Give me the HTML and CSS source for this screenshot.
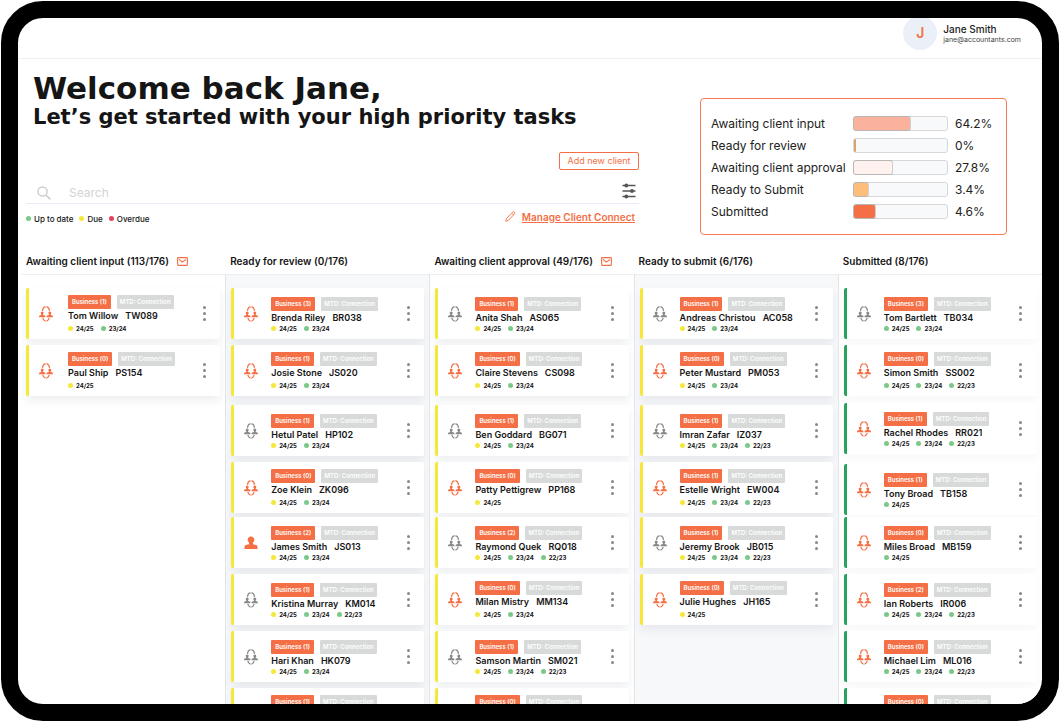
FILE: index.html
```html
<!DOCTYPE html>
<html lang="en">
<head>
<meta charset="utf-8">
<meta name="viewport" content="width=device-width, initial-scale=1">
<title>Client dashboard</title>
<link rel="stylesheet" href="styles.css">
</head>
<body>
<svg class="sprite" aria-hidden="true">
  <symbol id="icon-agents" viewBox="0 0 14 16">
    <g fill="none" stroke="currentColor" stroke-width="1.2">
      <path d="M3.500 4.900C3.700 2.600 4.700 1.200 6 .9M6.400.8h1.200M8 .9c1.300.3 2.300 1.700 2.500 4"/>
      <path d="M3.800 11.800c.3 1.600 1.100 2.700 2.300 3.100M6.500 15.100h1M7.900 14.900c1.200-.4 2-1.500 2.300-3.100"/>
    </g>
    <g fill="currentColor">
      <circle cx="3.200" cy="7.100" r="1.500"/><path d="M2.400 8h1.600v1.100l1.900.4q.6.200.6 1.700H0q0-1.500.6-1.700l1.800-.4z"/>
      <circle cx="10.800" cy="7.100" r="1.500"/><path d="M10 8h1.600v1.100l1.800.4q.6.200.6 1.700H7.500q0-1.500.6-1.700l1.900-.4z"/>
    </g>
  </symbol>
  <symbol id="icon-person" viewBox="0 0 14 16">
    <path fill="currentColor" d="M7 1.500a3.400 3.400 0 0 1 2 6.100v1.600l3.200.9c1.100.4 1.400 1.200 1.400 4H.4c0-2.800.3-3.600 1.400-4L5 9.200V7.600a3.400 3.400 0 0 1 2-6.100z"/>
  </symbol>
  <symbol id="icon-mail" viewBox="0 0 11 9">
    <rect x=".6" y=".6" width="9.800" height="7.800" rx=".8" fill="none" stroke="currentColor" stroke-width="1.100"/>
    <path d="M1.800 2.400 5.500 5l3.700-2.600" fill="none" stroke="currentColor" stroke-width="1.100"/>
  </symbol>
</svg>
<div class="device">
  <div class="screen">
    <header class="topbar">
      <div class="avatar">J</div>
      <div class="user">
        <div class="user-name">Jane Smith</div>
        <div class="user-mail">jane@accountants.com</div>
      </div>
    </header>
    <main class="main">
      <section class="intro">
        <div class="intro-left">
          <h1 class="title">Welcome back Jane,</h1>
          <p class="subtitle">Let’s get started with your high priority tasks</p>
          <button class="add-client" type="button">Add new client</button>
          <div class="search">
            <svg class="search-icon" viewBox="0 0 14 14" aria-hidden="true"><circle cx="5.500" cy="5.500" r="4.600" fill="none" stroke="currentColor" stroke-width="1.500"/><path d="m9 9 4.300 4.300" stroke="currentColor" stroke-width="1.700"/></svg>
            <input class="search-input" type="text" placeholder="Search" aria-label="Search">
            <button class="filter" type="button" aria-label="Filters">
              <svg viewBox="0 0 14 16" width="14" height="16" aria-hidden="true"><path d="M.5 2.500h13M.5 8h13M.5 13.500h13" stroke="currentColor" stroke-width="1.300"/><g fill="currentColor"><circle cx="4.300" cy="2.500" r="1.900"/><circle cx="10" cy="8" r="1.900"/><circle cx="4.300" cy="13.500" r="1.900"/></g></svg>
            </button>
          </div>
          <div class="subrow">
            <ul class="legend">
              <li><i class="dot dot-green"></i>Up to date</li>
              <li><i class="dot dot-yellow"></i>Due</li>
              <li><i class="dot dot-red"></i>Overdue</li>
            </ul>
            <a class="manage" href="#"><svg viewBox="0 0 11 11" width="11" height="11" aria-hidden="true"><path d="M.8 10.200 1.400 7.500 7.700 1.200q.8-.8 1.700 0 .9.900.1 1.700L3.300 9.500zM6.800 2.200l1.800 1.800" fill="none" stroke="currentColor" stroke-width=".9" stroke-linejoin="round"/></svg><span>Manage Client Connect</span></a>
          </div>
        </div>
        <ul class="stats">
          <li><span>Awaiting client input</span><div class="bar"><div class="fill fill-salmon" style="width:60%"></div></div><span>64.2%</span></li>
          <li><span>Ready for review</span><div class="bar"><div class="fill fill-tan" style="width:2%"></div></div><span>0%</span></li>
          <li><span>Awaiting client approval</span><div class="bar"><div class="fill fill-pale" style="width:41%"></div></div><span>27.8%</span></li>
          <li><span>Ready to Submit</span><div class="bar"><div class="fill fill-amber" style="width:15%"></div></div><span>3.4%</span></li>
          <li><span>Submitted</span><div class="bar"><div class="fill fill-orange" style="width:23%"></div></div><span>4.6%</span></li>
        </ul>
      </section>
      <section class="board" id="board"></section>
    </main>
  </div>
</div>
<script src="board.js"></script>
</body>
</html>
```
FILE: styles.css
```css
* { box-sizing: border-box; }
body { margin: 0; background: #fff; color: #151515; font-family: Inter, "Liberation Sans", sans-serif; }
h1, h2, p, ul { margin: 0; padding: 0; }
li { list-style: none; }
button { font: inherit; cursor: pointer; }
.sprite { display: none; }

.device { height: 100vh; padding: 1px; overflow: hidden; }
.screen { height: 100%; border: 17px solid #000; border-radius: 42px; overflow: hidden; display: flex; flex-direction: column; background: #fff; }

.topbar { flex: none; display: flex; justify-content: flex-end; align-items: center; gap: 6px; height: 41px; padding: 0 21px 10px 0; border-bottom: 1px solid #f0f1f3; overflow: hidden; }
.avatar { width: 34px; height: 34px; border-radius: 50%; background: #ebeff8; color: #f46f45; font-size: 14px; font-weight: 600; line-height: 34px; text-align: center; }
.user-name { font-size: 10px; line-height: 12px; font-weight: 500; color: #222; }
.user-mail { font-size: 7px; line-height: 9px; color: #444; }

.main { flex: 1; min-height: 0; display: flex; flex-direction: column; }
.intro { flex: none; display: grid; grid-template-columns: minmax(0, 1fr) 307px; column-gap: 61px; align-items: start; padding: 0 35px 0 8px; }
.intro-left { display: flex; flex-direction: column; }
.title { margin: 12px 0 0 7px; font: 700 31px/34px "DejaVu Sans", sans-serif; white-space: nowrap; }
.subtitle { margin-left: 7px; font: 700 21px/24px "DejaVu Sans", sans-serif; white-space: nowrap; }
.add-client { align-self: flex-end; width: 80px; height: 18px; margin-top: 23px; padding: 0; border: 1px solid #f46f45; border-radius: 2px; background: #fff; color: #f46f45; font-size: 9px; line-height: 14px; }
.search { display: flex; align-items: center; height: 34px; padding: 12px 3px 0 11px; border-bottom: 1px solid #ebecf6; }
.search-icon { width: 14px; height: 14px; color: #cfcfcf; }
.search-input { flex: 1; min-width: 0; margin-left: 18px; padding: 0; border: 0; outline: 0; font: 400 12px/16px Inter, sans-serif; }
.search-input::placeholder { color: #d3d3d3; opacity: 1; }
.filter { display: flex; padding: 0; border: 0; background: none; color: #555; margin: -4px 0 0; }
.subrow { display: flex; justify-content: space-between; align-items: center; height: 25px; margin-bottom: 1px; padding-right: 4px; }
.legend { display: flex; gap: 6px; padding-top: 4px; font-size: 8px; font-weight: 500; line-height: 10px; }
.legend li { display: flex; align-items: center; gap: 3px; }
.dot { flex: none; width: 5px; height: 5px; border-radius: 50%; }
.dot-green { background: #7bc988; }
.dot-yellow { background: #f6e83a; }
.dot-red { background: #e34360; }
.manage { display: flex; align-items: center; gap: 6px; color: #f46f45; font-size: 10px; line-height: 12px; font-weight: 600; text-decoration: none; }
.manage span { text-decoration: underline; }

.stats { margin-top: 39px; height: 137px; padding: 13px 6px 11px 10px; border: 1px solid #f47a55; border-radius: 4px; font-size: 12px; color: #222; }
.stats li { display: grid; grid-template-columns: minmax(0, 1fr) 95px 45px; column-gap: 7px; align-items: center; height: 22px; white-space: nowrap; }
.bar { height: 15px; border: 1px solid #d5d7d9; border-radius: 3px; background: #f8f9fb; }
.fill { height: 13px; border-radius: 2px; box-shadow: 0 0 0 1px rgba(120, 110, 100, .3); }
.fill-salmon { background: #fab29d; }
.fill-tan { background: #d8a56c; box-shadow: none; }
.fill-pale { background: #fff1ed; }
.fill-amber { background: #fdbe79; }
.fill-orange { background: #f46f45; }

.board { flex: 1; min-height: 0; display: grid; grid-template-columns: repeat(5, minmax(0, 1fr)); grid-template-rows: minmax(0, 1fr); padding: 13px 0 0 3px; overflow: hidden; }
.column { display: flex; flex-direction: column; min-height: 0; }
.column-title { display: flex; align-items: center; gap: 8px; height: 26px; padding-left: 5px; font-size: 10px; line-height: 14px; font-weight: 600; white-space: nowrap; }
.mail { width: 11px; height: 9px; color: #f46f45; }
.cards { flex: 1; min-height: 0; padding: 13px 5px 0; border-top: 1px solid #eceeef; border-left: 1px solid #e2e5e7; overflow: hidden; }
.column:first-child .cards { padding-left: 4px; border-left-color: transparent; }
.column:first-child .details { padding-left: 5px; }
.column:nth-child(even) .cards { background: #f7f8fa; }
.card { display: grid; grid-template-columns: 34px minmax(0, 1fr) 32px; height: 51px; margin-bottom: 6px; border-left: 3px solid #f6e83a; border-radius: 2px; background: #fff; box-shadow: 0 5px 10px rgba(70, 80, 95, .09); }
.card:nth-child(2) { margin-bottom: 9px; }
.card:nth-child(4) { margin-bottom: 4px; }
.column-done .card { border-left-color: #27a35b; box-shadow: 0 5px 8px rgba(70, 80, 95, .04); }
.column-done .card:nth-child(2) { margin-bottom: 7px; }
.column-done .card:nth-child(3) { margin-bottom: 10px; }
.column-done .card:nth-child(4) { margin-bottom: 2px; }
.agent { width: 14px; height: 16px; margin: 18px 0 0 10px; color: #888; }
.agent-on { color: #f46f45; }
.details { padding: 9px 0 0 3px; white-space: nowrap; }
.details-high { padding-top: 7px; }
.tags { display: flex; gap: 6px; }
.tag { height: 14px; padding: 0 4px; border-radius: 1px; background: #f46f45; color: #fff; font-size: 6px; line-height: 14px; font-weight: 600; }
.tag-muted { padding: 0 3px; background: #d8dada; }
.name { display: flex; gap: 7px; font-size: 9px; line-height: 14px; font-weight: 600; }
.years { display: flex; gap: 7px; font-size: 6px; line-height: 7px; font-weight: 700; }
.details-high .years { padding-top: 2px; }
.year { display: flex; align-items: center; gap: 3px; }
.kebab { display: flex; flex-direction: column; align-items: center; gap: 3px; padding: 18px 0 0; border: 0; background: none; }
.kebab i { width: 3px; height: 3px; border-radius: 50%; background: #888; }
```
FILE: board.js
```js
// Card fields: name, code, businesses, years ("y" due / "g" up to date, newest first), icon, text sits high
const columns = [
  { title: "Awaiting client input (113/176)", mail: true, cards: [
    ["Tom Willow", "TW089", 1, "yg", "on", 1],
    ["Paul Ship", "PS154", 0, "y", "on", 1]] },
  { title: "Ready for review (0/176)", cards: [
    ["Brenda Riley", "BR038", 3, "yg", "on", 0],
    ["Josie Stone", "JS020", 1, "yg", "on", 1],
    ["Hetul Patel", "HP102", 1, "yg", "off", 0],
    ["Zoe Klein", "ZK096", 0, "yg", "on", 1],
    ["James Smith", "JS013", 2, "yg", "person", 0],
    ["Kristina Murray", "KM014", 1, "ygg", "off", 0],
    ["Hari Khan", "HK079", 1, "yg", "off", 0],
    ["", "", 1, "", "", 1]] },
  { title: "Awaiting client approval (49/176)", mail: true, cards: [
    ["Anita Shah", "AS065", 1, "yg", "off", 0],
    ["Claire Stevens", "CS098", 0, "yg", "on", 1],
    ["Ben Goddard", "BG071", 1, "yg", "off", 0],
    ["Patty Pettigrew", "PP168", 0, "y", "on", 1],
    ["Raymond Quek", "RQ018", 2, "ygg", "off", 0],
    ["Milan Mistry", "MM134", 0, "yg", "on", 1],
    ["Samson Martin", "SM021", 1, "ygg", "off", 0],
    ["", "", 0, "", "", 1]] },
  { title: "Ready to submit (6/176)", cards: [
    ["Andreas Christou", "AC058", 1, "yg", "off", 0],
    ["Peter Mustard", "PM053", 0, "yg", "on", 1],
    ["Imran Zafar", "IZ037", 1, "ygg", "off", 0],
    ["Estelle Wright", "EW004", 1, "ygg", "on", 1],
    ["Jeremy Brook", "JB015", 1, "ygg", "off", 0],
    ["Julie Hughes", "JH165", 0, "y", "on", 1]] },
  { title: "Submitted (8/176)", done: true, cards: [
    ["Tom Bartlett", "TB034", 3, "gg", "off", 0],
    ["Simon Smith", "SS002", 0, "ggg", "on", 1],
    ["Rachel Rhodes", "RR021", 1, "ggg", "on", 0],
    ["Tony Broad", "TB158", 1, "g", "on", 0],
    ["Miles Broad", "MB159", 0, "g", "on", 0],
    ["Ian Roberts", "IR006", 2, "ggg", "on", 0],
    ["Michael Lim", "ML016", 0, "ggg", "on", 0],
    ["", "", 0, "", "", 1]] }
];
const labels = ["24/25", "23/24", "22/23"];

function card([name, code, businesses, years, icon, high]) {
  const tone = icon === "off" ? "" : " agent-on";
  const shape = icon === "person" ? "icon-person" : "icon-agents";
  const agent = `<svg class="agent${tone}" aria-hidden="true">${icon ? `<use href="#${shape}"/>` : ""}</svg>`;
  const yearList = [...years].map((y, i) =>
    `<span class="year"><i class="dot ${y === "y" ? "dot-yellow" : "dot-green"}"></i>${labels[i]}</span>`).join("");
  const menu = name ? `<button class="kebab" type="button" aria-label="Options for ${name}"><i></i><i></i><i></i></button>` : "";
  return `<article class="card">${agent}<div class="details${high ? " details-high" : ""}">
    <div class="tags"><span class="tag">Business (${businesses})</span><span class="tag tag-muted">MTD: Connection</span></div>
    <div class="name"><span>${name}</span><span>${code}</span></div>
    <div class="years">${yearList}</div></div>${menu}</article>`;
}

document.getElementById("board").innerHTML = columns.map(c =>
  `<div class="column${c.done ? " column-done" : ""}"><h2 class="column-title">${c.title}${c.mail ? '<svg class="mail" aria-hidden="true"><use href="#icon-mail"/></svg>' : ""}</h2>
  <div class="cards">${c.cards.map(card).join("")}</div></div>`).join("");
```
